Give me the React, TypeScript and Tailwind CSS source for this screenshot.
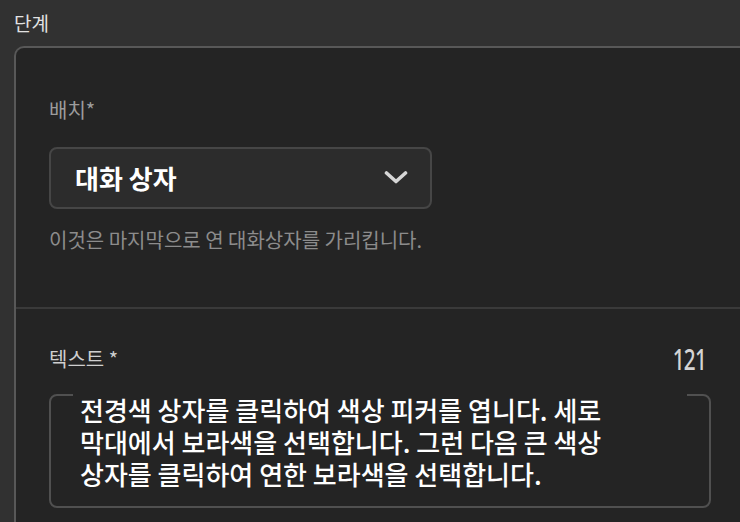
const font = { fontFamily: '"Noto Sans CJK KR", "Noto Sans", sans-serif' }

function ChevronDown() {
  return (
    <svg width="24" height="24" viewBox="0 0 24 24" fill="none" className="shrink-0">
      <path d="M2.5 7 12 15.5 21.5 7" stroke="#d6d6d6" strokeWidth="3.6" strokeLinecap="round" strokeLinejoin="round" />
    </svg>
  )
}

export default function App() {
  return (
    <div className="w-[740px] h-[522px] overflow-hidden bg-[#313131]" style={font}>
      <div className="h-[46px] px-[14px] flex items-center text-[19px] text-[#e2e2e2]">단계</div>

      <div className="ml-[14px] h-[476px] bg-[#242424] border-t-2 border-l-2 border-[#585858] rounded-tl-[10px]">
        <div className="pl-[33px] pt-[48px] pb-[53px]">
          <div className="h-7 leading-7 text-[20px] text-[#9c9c9c]">배치*</div>
          <button className="mt-[23px] w-[383px] h-[62px] flex items-center justify-between pl-[24px] pr-[22px] bg-[#2c2c2c] border-2 border-[#464646] rounded-[8px]">
            <span className="text-[26px] leading-8 font-semibold text-white">대화 상자</span>
            <ChevronDown />
          </button>
          <div className="mt-[17px] h-7 leading-7 text-[20px] text-[#8c8c8c]">
            이것은 마지막으로 연 대화상자를 가리킵니다.
          </div>
        </div>

        <div className="border-t-2 border-[#3a3a3a] pl-[33px] pr-[29px] pt-[36px]">
          <div className="flex items-center justify-between h-7">
            <span className="text-[20px] text-[#cfcfcf]">텍스트 *</span>
            <span
              className="mr-[5px] text-[28px] font-medium tracking-[-1px] text-[#d4d4d4] scale-x-[0.74] origin-right"
              style={{ fontFamily: '"Noto Sans", sans-serif' }}
            >
              121
            </span>
          </div>
          <div className="mt-[21px] h-[114px] border-2 border-[#505050] rounded-[8px] px-[22px]">
            <div className="-mt-[2px] bg-[#242424] pl-[7px] text-[26px] leading-[32px] font-medium text-white">
              <div className="h-8">전경색 상자를 클릭하여 색상 피커를 엽니다. 세로</div>
              <div className="h-8">막대에서 보라색을 선택합니다. 그런 다음 큰 색상</div>
              <div className="h-8">상자를 클릭하여 연한 보라색을 선택합니다.</div>
            </div>
          </div>
        </div>
      </div>
    </div>
  )
}
